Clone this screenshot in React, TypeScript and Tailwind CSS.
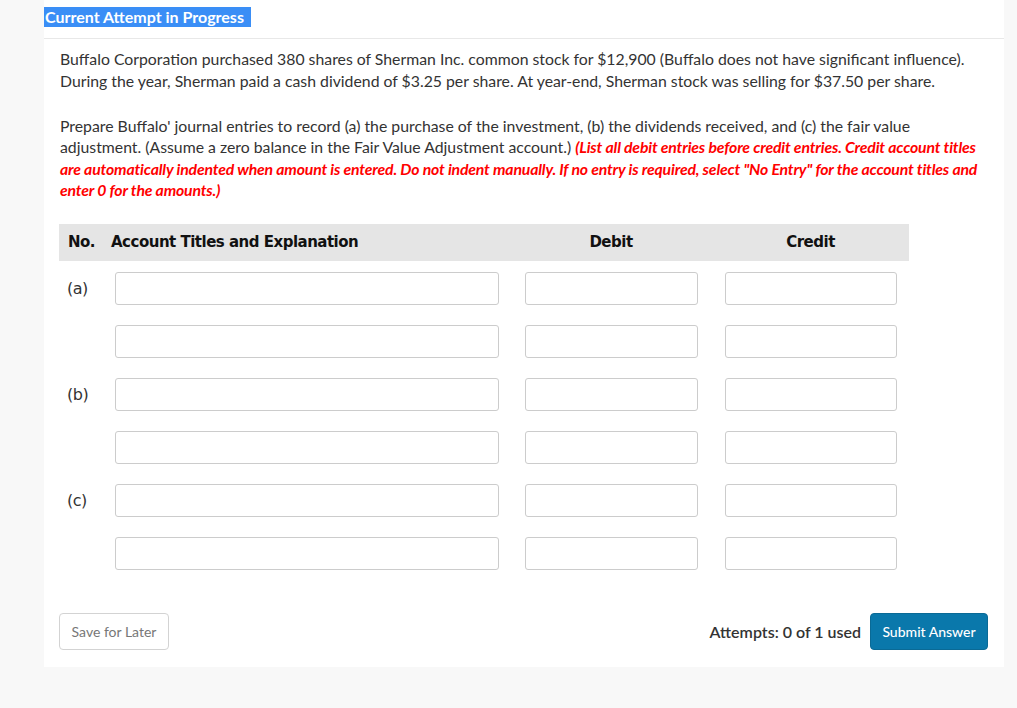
import React from 'react';

const rows = [
  { label: '(a)' },
  { label: '' },
  { label: '(b)' },
  { label: '' },
  { label: '(c)' },
  { label: '' },
];

const inputCls =
  'h-[33px] rounded-[3px] border border-[#cccccc] bg-white outline-none';

export default function App() {
  return (
    <div className="min-h-screen bg-[#f8f8f8] pl-[44px] font-['Lato','Noto_Sans',sans-serif] text-[#333333]">
      <div className="w-[960px] bg-white pt-[7px] pb-[17px]">
        {/* status banner */}
        <div className="h-[20px] w-fit bg-[#3a8ef6] pl-[1px] pr-[7px] text-[16px] font-bold leading-[20px] text-white">
          Current Attempt in Progress
        </div>
        <div className="mt-[11px] border-t border-[#e8e8e8]" />

        <div className="px-[16px] pt-[9px]">
          <p className="text-[15.8px] leading-[21.6px]">
            Buffalo Corporation purchased 380 shares of Sherman Inc. common stock for $12,900 (Buffalo does not have significant influence).
            During the year, Sherman paid a cash dividend of $3.25 per share. At year-end, Sherman stock was selling for $37.50 per share.
          </p>
          <p className="mt-[23.5px] text-[15.8px] leading-[21.6px]">
            Prepare Buffalo' journal entries to record (a) the purchase of the investment, (b) the dividends received, and (c) the fair value
            adjustment. (Assume a zero balance in the Fair Value Adjustment account.){' '}
            <span className="font-bold italic tracking-[-0.17px] text-[#ff0000]">
              (List all debit entries before credit entries. Credit account titles are automatically indented when amount is entered. Do not
              indent manually. If no entry is required, select "No Entry" for the account titles and enter 0 for the amounts.)
            </span>
          </p>
        </div>

        {/* journal table */}
        <div className="mt-[23px] ml-[15px] w-[850px] font-['DejaVu_Sans','Verdana',sans-serif]">
          <div className="flex h-[37px] items-center bg-[#e5e5e5] text-[15px] font-bold tracking-[-0.5px] text-[#111111]">
            <div className="w-[52px] pl-[9px]">No.</div>
            <div className="w-[414px]">Account Titles and Explanation</div>
            <div className="w-[172px] text-center">Debit</div>
            <div className="ml-[28px] w-[171px] text-center">Credit</div>
          </div>
          <div className="mt-[11px] flex flex-col gap-[20px]">
            {rows.map((r, i) => (
              <div key={i} className="flex items-center">
                <div className="w-[56px] pl-[8px] text-[16px] tracking-[-0.5px] text-[#333333]">{r.label}</div>
                <input className={`${inputCls} w-[384px]`} />
                <input className={`${inputCls} ml-[26px] w-[173px]`} />
                <input className={`${inputCls} ml-[27px] w-[172px]`} />
              </div>
            ))}
          </div>
        </div>

        {/* footer */}
        <div className="mt-[43px] flex items-center justify-between px-[15px] pr-[16px]">
          <button className="h-[37px] w-[110px] rounded-[4px] border border-[#d3d3d3] bg-white text-[14px] text-[#777777]">
            Save for Later
          </button>
          <div className="flex items-center gap-[9px]">
            <span className="text-[16px] font-semibold text-[#333333]">Attempts: 0 of 1 used</span>
            <button className="h-[37px] w-[118px] rounded-[4px] border border-[#0a6a96] bg-[#0a78ab] text-[14px] font-medium text-white">
              Submit Answer
            </button>
          </div>
        </div>
      </div>
    </div>
  );
}
